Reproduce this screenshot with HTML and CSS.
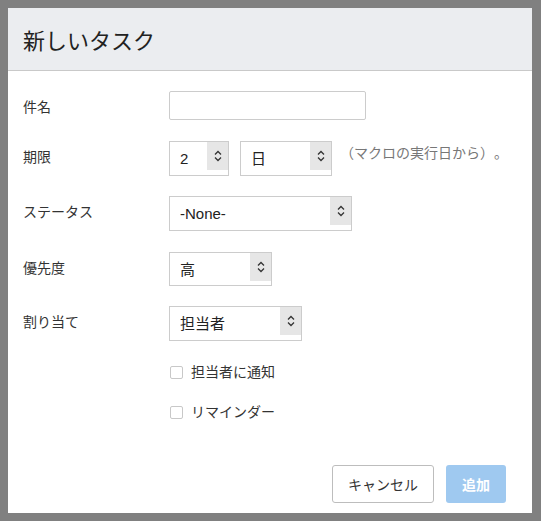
FILE: index.html
```html
<!DOCTYPE html>
<html lang="ja">
<head>
<meta charset="utf-8">
<title>新しいタスク</title>
<link rel="stylesheet" href="styles.css">
</head>
<body>
<div class="dialog">
  <div class="header"><h1 class="title">新しいタスク</h1></div>
  <div class="form">
    <div class="row row-first">
      <div class="label">件名</div>
      <div class="input"></div>
    </div>
    <div class="row">
      <div class="label">期限</div>
      <div class="select w-num"><span class="val">2</span><span class="spin"><svg width="8" height="12" viewBox="0 0 8 12"><path d="M1 4.5L4 1.5L7 4.5M1 7.5L4 10.5L7 7.5" fill="none" stroke="#333" stroke-width="1.3"/></svg></span></div>
      <div class="select w-unit"><span class="val">日</span><span class="spin"><svg width="8" height="12" viewBox="0 0 8 12"><path d="M1 4.5L4 1.5L7 4.5M1 7.5L4 10.5L7 7.5" fill="none" stroke="#333" stroke-width="1.3"/></svg></span></div>
      <div class="note">（マクロの実行日から）。</div>
    </div>
    <div class="row row-wide">
      <div class="label">ステータス</div>
      <div class="select w-status"><span class="val">-None-</span><span class="spin"><svg width="8" height="12" viewBox="0 0 8 12"><path d="M1 4.5L4 1.5L7 4.5M1 7.5L4 10.5L7 7.5" fill="none" stroke="#333" stroke-width="1.3"/></svg></span></div>
    </div>
    <div class="row">
      <div class="label">優先度</div>
      <div class="select w-prio"><span class="val">高</span><span class="spin"><svg width="8" height="12" viewBox="0 0 8 12"><path d="M1 4.5L4 1.5L7 4.5M1 7.5L4 10.5L7 7.5" fill="none" stroke="#333" stroke-width="1.3"/></svg></span></div>
    </div>
    <div class="row">
      <div class="label">割り当て</div>
      <div class="select w-assign"><span class="val">担当者</span><span class="spin"><svg width="8" height="12" viewBox="0 0 8 12"><path d="M1 4.5L4 1.5L7 4.5M1 7.5L4 10.5L7 7.5" fill="none" stroke="#333" stroke-width="1.3"/></svg></span></div>
    </div>
    <div class="check-row"><span class="box"></span><span class="check-text">担当者に通知</span></div>
    <div class="check-row"><span class="box"></span><span class="check-text">リマインダー</span></div>
  </div>
  <div class="footer">
    <button class="btn btn-cancel">キャンセル</button>
    <button class="btn btn-add">追加</button>
  </div>
</div>
</body>
</html>
```
FILE: styles.css
```css
html, body {
  margin: 0;
  padding: 0;
}
body {
  background: #808080;
  width: 541px;
  height: 521px;
  overflow: hidden;
  font-family: "Liberation Sans", "Noto Sans CJK JP", sans-serif;
  color: #333;
  text-spacing-trim: space-all;
}
.dialog {
  margin: 8px;
  width: 524px;
  height: 505px;
  background: #fff;
  display: flex;
  flex-direction: column;
  box-sizing: border-box;
}
.header {
  height: 62px;
  flex: none;
  background: #ebedf0;
  border-bottom: 1px solid #c9c9c9;
  display: flex;
  align-items: center;
  padding-left: 15px;
}
.title {
  margin: 0;
  font-size: 22px;
  font-weight: normal;
  color: #222;
  font-family: "Noto Sans CJK JP", sans-serif;
  line-height: 30px;
}
.form {
  padding: 20px 0 0 15px;
}
.row {
  display: flex;
  align-items: flex-start;
  margin-bottom: 20px;
}
.row-first, .row-wide {
  margin-bottom: 21px;
}
.label {
  width: 146px;
  flex: none;
  font-size: 14px;
  line-height: 20px;
  padding-top: 5px;
  font-family: "Noto Sans CJK JP", sans-serif;
  color: #333;
}
.input {
  width: 197px;
  height: 29px;
  box-sizing: border-box;
  border: 1px solid #cccccc;
  border-radius: 2px;
}
.select {
  height: 35px;
  box-sizing: border-box;
  border: 1px solid #cccccc;
  display: flex;
  align-items: flex-start;
  font-size: 15px;
  color: #222;
}
.val {
  flex: 1;
  padding-left: 10px;
  line-height: 33px;
}
.spin {
  width: 21px;
  height: 28px;
  background: #e6e6e6;
  display: flex;
  align-items: center;
  justify-content: center;
}
.spin svg {
  display: block;
}
.w-num { width: 60px; margin-right: 11px; }
.w-unit { width: 92px; }
.w-status { width: 183px; }
.w-prio { width: 103px; height: 34px; }
.w-assign { width: 133px; }
.note {
  margin-left: 8px;
  font-size: 14px;
  line-height: 20px;
  padding-top: 1px;
  color: #777;
  font-family: "Noto Sans CJK JP", sans-serif;
  text-spacing-trim: space-all;
  font-feature-settings: "fwid" 1;
}
.check-row {
  display: flex;
  align-items: center;
  height: 20px;
  margin-left: 147px;
  margin-bottom: 20px;
}
.box {
  width: 13px;
  height: 13px;
  box-sizing: border-box;
  border: 1px solid #c8c8c8;
  border-radius: 2px;
  background: #fff;
  margin-top: 2px;
}
.check-text {
  margin-left: 8px;
  font-size: 14px;
  line-height: 20px;
  color: #333;
  font-family: "Noto Sans CJK JP", sans-serif;
}
.footer {
  margin-top: auto;
  display: flex;
  justify-content: flex-end;
  gap: 12px;
  padding: 0 26px 10px 0;
}
.btn {
  height: 38px;
  box-sizing: border-box;
  border-radius: 3px;
  font-size: 14px;
  font-family: "Noto Sans CJK JP", sans-serif;
  padding: 0;
}
.btn-cancel {
  width: 102px;
  background: #fff;
  border: 1px solid #bdbdbd;
  color: #333;
}
.btn-add {
  width: 60px;
  background: #9fc9f0;
  border: none;
  color: #fff;
  font-weight: bold;
}
```
